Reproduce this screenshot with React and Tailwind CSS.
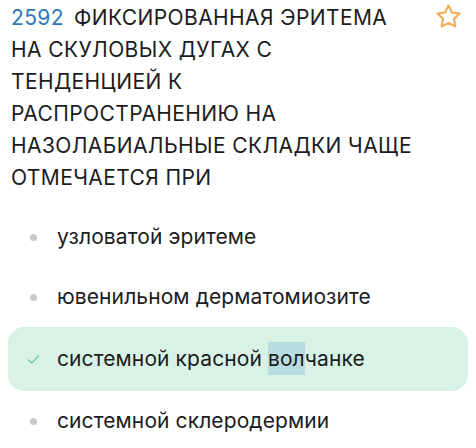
import React from "react";

export default function App() {
  const answers = [
    { text: "узловатой эритеме" },
    { text: "ювенильном дерматомиозите" },
    { text: "системной красной волчанке", correct: true },
    { text: "системной склеродермии" },
  ];

  const questionLines = [
    "Фиксированная эритема",
    "на скуловых дугах с",
    "тенденцией к",
    "распространению на",
    "назолабиальные складки чаще",
    "отмечается при",
  ];

  return (
    <div
      className="w-[476px] h-[448px] bg-white text-[#1c1c1e] overflow-hidden"
      style={{ fontFamily: "Inter, 'Noto Sans', sans-serif" }}
    >
      {/* question */}
      <div className="flex items-start pt-[2px] pl-[11px]">
        <p className="w-[413px] text-[21px] tracking-[0.4px] leading-[32px] uppercase whitespace-nowrap">
          <span className="text-[#2d77b8] mr-[10px]">2592</span>
          {questionLines.map((line, i) => (
            <React.Fragment key={i}>
              {i > 0 && <br />}
              {line}
            </React.Fragment>
          ))}
        </p>
        <svg className="ml-[10px] shrink-0" width="29" height="29" viewBox="0 0 24 24" fill="none" stroke="#f5aa55" strokeWidth="1.7" strokeLinejoin="round">
          <path d="M12 2.8l2.8 5.9 6.4.8-4.7 4.4 1.2 6.4L12 17.2l-5.7 3.1 1.2-6.4-4.7-4.4 6.4-.8z" />
        </svg>
      </div>

      {/* answers */}
      <div className="mt-[13px] flex flex-col">
        {answers.map((a, i) => (
          <div
            key={i}
            className={
              a.correct
                ? "mx-[8px] h-[64px] flex items-center pl-[17px] rounded-[16px] bg-[#d9f2e6]"
                : "mx-[8px] h-[60px] flex items-center pl-[17px]"
            }
          >
            <div className="w-[16px] flex justify-center">
              {a.correct ? (
                <svg width="13" height="11" viewBox="0 0 14 12" fill="none" stroke="#5cc48f" strokeWidth="1.3" strokeLinecap="round" strokeLinejoin="round">
                  <path d="M1.5 6.5l3.5 3.5 7.5-8" />
                </svg>
              ) : (
                <span className="block w-[7px] h-[7px] rounded-full bg-[#c9c9cc]" />
              )}
            </div>
            <span className="ml-[16px] text-[21px] tracking-[0.1px]">
              {a.correct ? (
                <>
                  системной красной <span className="bg-[#b6dde2] py-[4px]">вол</span>чанке
                </>
              ) : (
                a.text
              )}
            </span>
          </div>
        ))}
      </div>
    </div>
  );
}
